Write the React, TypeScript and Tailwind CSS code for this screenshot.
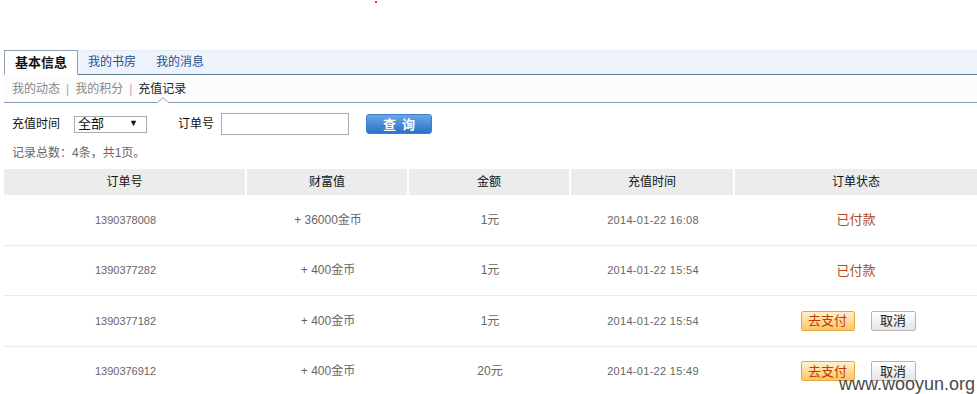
import React from 'react';

interface Order {
  id: string;
  coins: string;
  amount: string;
  time: string;
  paid: boolean;
}

const orders: Order[] = [
  { id: '1390378008', coins: '+ 36000金币', amount: '1元', time: '2014-01-22 16:08', paid: true },
  { id: '1390377282', coins: '+ 400金币', amount: '1元', time: '2014-01-22 15:54', paid: true },
  { id: '1390377182', coins: '+ 400金币', amount: '1元', time: '2014-01-22 15:54', paid: false },
  { id: '1390376912', coins: '+ 400金币', amount: '20元', time: '2014-01-22 15:49', paid: false },
];

const cols = ['w-[243px]', 'w-[162px]', 'w-[162px]', 'w-[164px]', 'w-[242px]'];
const heads = ['订单号', '财富值', '金额', '充值时间', '订单状态'];

export default function App() {
  return (
    <div className="relative w-[977px] h-[394px] overflow-hidden bg-white pt-[50px] pl-[4px] text-[12px] text-[#333] font-['Liberation_Sans','Noto_Sans_CJK_SC',sans-serif]">
      <span className="absolute left-[375px] top-[1px] w-[2px] h-[2px] bg-[#e03030]" />

      {/* tabs */}
      <div className="flex items-end h-[25px] bg-[#edf3fc] border-t border-[#e4ebf5] border-b border-b-[#5f7f93]">
        <div className="-mb-px h-[25px] px-[10px] flex items-center bg-white border-x border-t border-[#8aa0b4] border-b border-b-white font-bold text-[13px] text-[#111]">基本信息</div>
        <div className="h-[24px] px-[10px] flex items-center text-[#1d4f91]">我的书房</div>
        <div className="h-[24px] px-[10px] flex items-center text-[#1d4f91]">我的消息</div>
      </div>

      {/* sub nav */}
      <div className="relative h-[28px] bg-[#fcfcfc] border-b border-[#8a9eb3] flex items-center pl-[8px] text-[#888]">
        <span>我的动态</span>
        <span className="mx-[6px] text-[#aaa]">|</span>
        <span>我的积分</span>
        <span className="mx-[6px] text-[#aaa]">|</span>
        <span className="text-[#222]">充值记录</span>
        <svg className="absolute left-[154px] bottom-[-1px]" width="10" height="6" viewBox="0 0 10 6">
          <path d="M0 5.5 L5 0.5 L10 5.5" fill="#fcfcfc" stroke="#8a9eb3" strokeWidth="1" />
          <rect x="0" y="5" width="10" height="1" fill="#fff" />
        </svg>
      </div>

      {/* filter */}
      <div className="mt-[10px] h-[22px] flex items-center pl-[8px] text-[#111]">
        <span>充值时间</span>
        <div className="ml-[14px] w-[73px] h-[17px] border border-[#a5acb2] bg-white flex items-center justify-between px-[3px]">
          <span className="text-[13px]">全部</span>
          <span className="text-[9px] mr-[5px]">▼</span>
        </div>
        <span className="ml-[31px]">订单号</span>
        <div className="ml-[7px] w-[128px] h-[22px] border border-[#ababab] bg-white" />
        <button className="ml-[17px] w-[66px] h-[20px] rounded-[3px] border border-[#3c7fcf] bg-gradient-to-b from-[#6aa6e6] to-[#2a72c8] text-white font-bold text-[13px] tracking-[6px] pl-[6px] leading-none">查询</button>
      </div>

      <div className="mt-[10px] h-[16px] flex items-center pl-[8px] text-[#666]">记录总数：4条，共1页。</div>

      {/* table */}
      <div className="mt-[8px]">
        <div className="flex h-[26px]">
          {heads.map((h, i) => (
            <div key={h} className={`${cols[i]} ${i < 4 ? 'border-r-2 border-white' : ''} bg-[#ececec] flex items-center justify-center text-[#111]`}>{h}</div>
          ))}
        </div>
        {orders.map(o => (
          <div key={o.id} className="flex h-[50.5px] border-b border-[#ebebeb] text-[#666]">
            <div className={`${cols[0]} flex items-center justify-center text-[11px]`}>{o.id}</div>
            <div className={`${cols[1]} flex items-center justify-center`}>{o.coins}</div>
            <div className={`${cols[2]} flex items-center justify-center`}>{o.amount}</div>
            <div className={`${cols[3]} flex items-center justify-center text-[11px] tracking-[0.3px]`}>{o.time}</div>
            <div className={`${cols[4]} flex items-center justify-center`}>
              {o.paid ? (
                <span className="text-[#b04a1a] text-[13px]">已付款</span>
              ) : (
                <div className="flex gap-[16px] ml-[4px]">
                  <button className="w-[54px] h-[20px] rounded-[2px] border border-[#e3a93f] bg-gradient-to-b from-[#fff0cc] to-[#fcc566] text-[#c03c00] text-[13px] leading-none">去支付</button>
                  <button className="w-[45px] h-[20px] rounded-[2px] border border-[#b5b5b5] bg-gradient-to-b from-white to-[#e4e4e4] text-[#222] text-[13px] leading-none">取消</button>
                </div>
              )}
            </div>
          </div>
        ))}
      </div>

      <span className="absolute right-[2px] bottom-[1px] text-[18px] leading-none text-[#4a4a4a] font-['Liberation_Sans',sans-serif]">www.wooyun.org</span>
    </div>
  );
}
